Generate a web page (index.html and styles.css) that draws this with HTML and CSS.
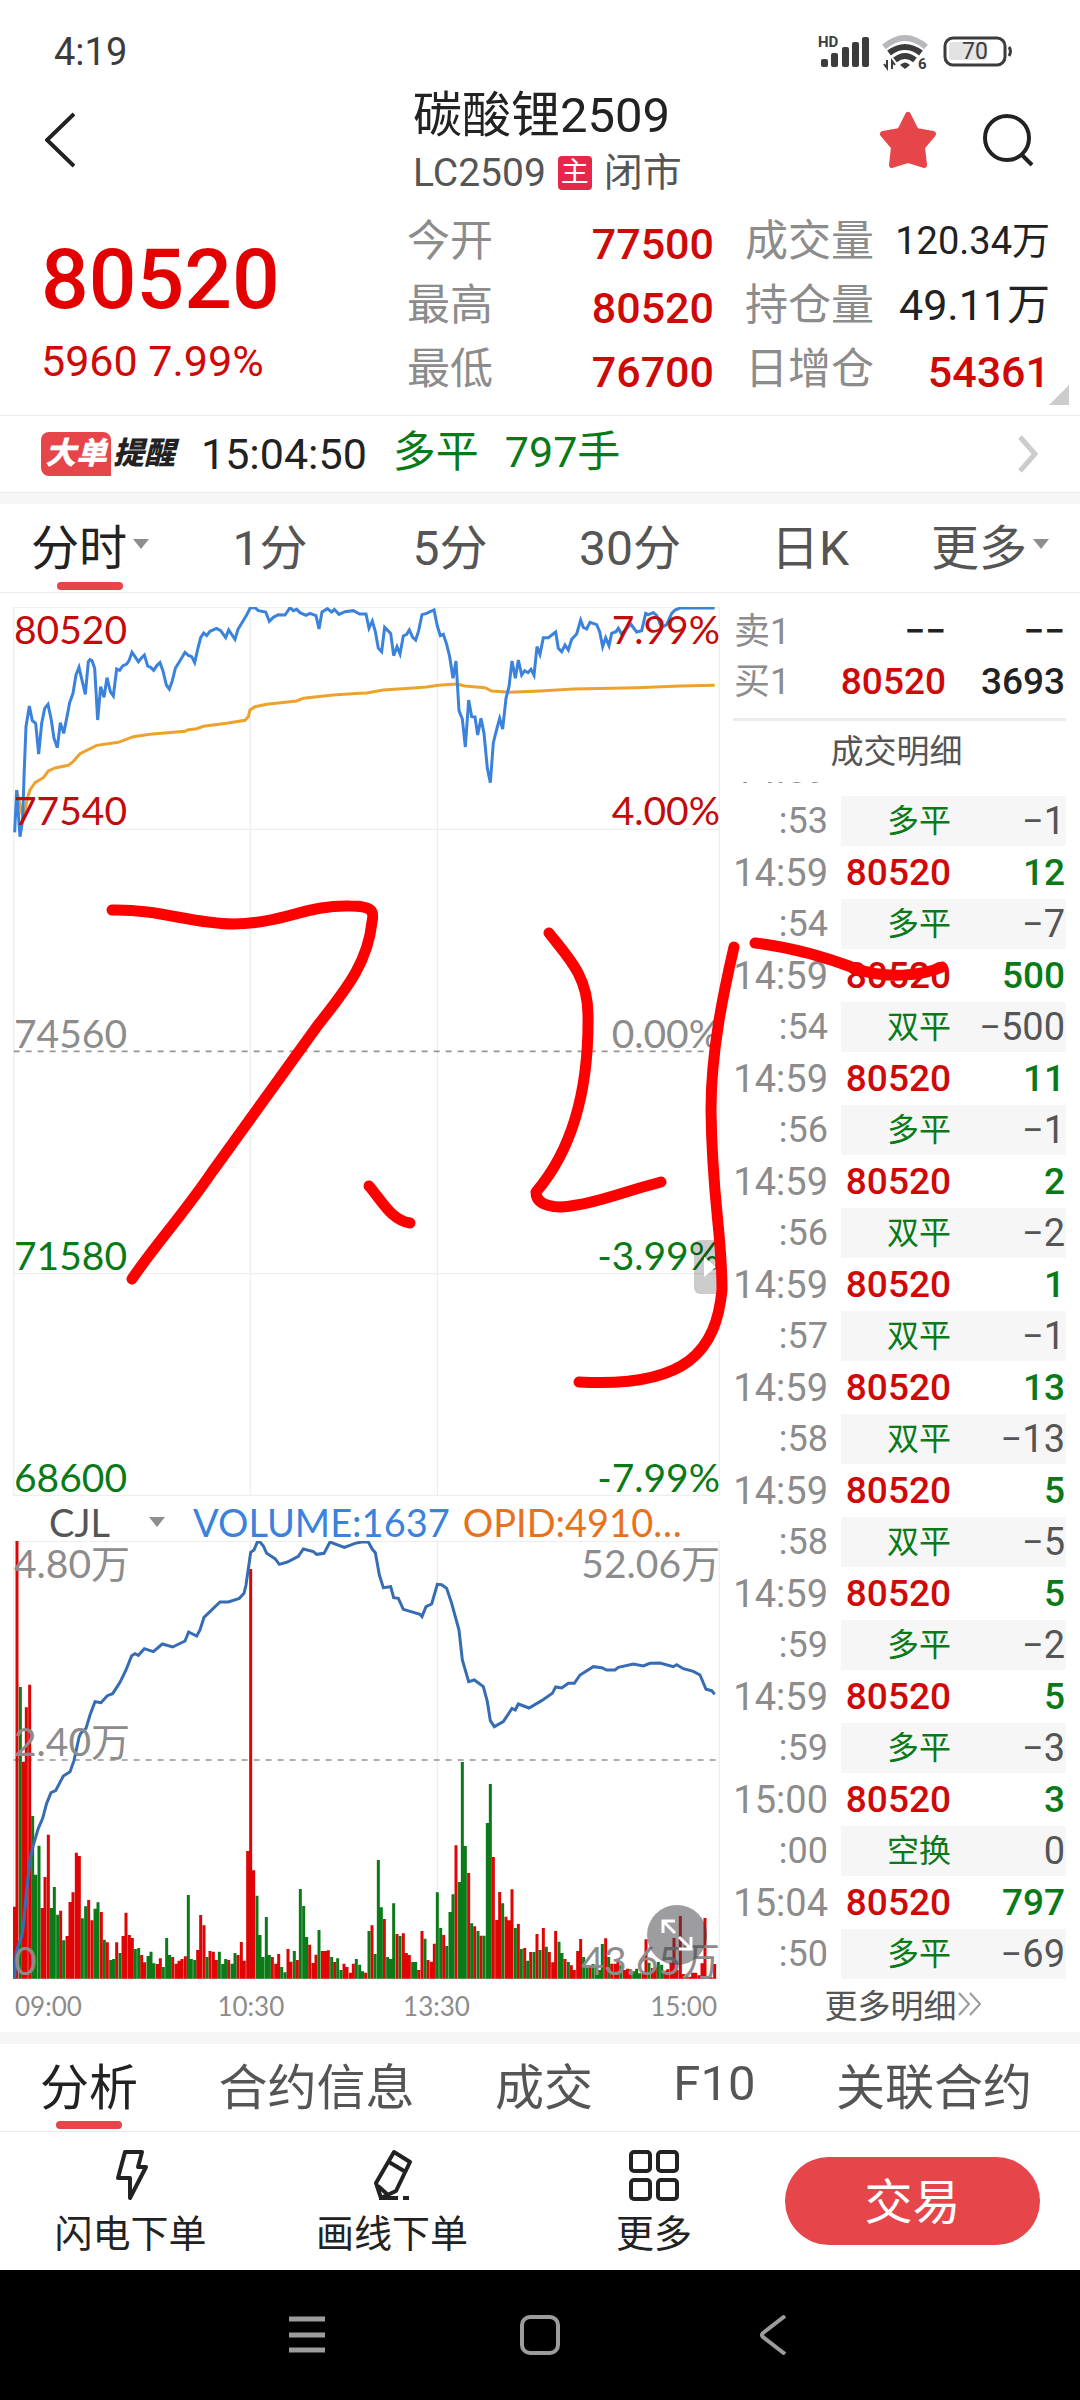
FILE: index.html
```html
<!DOCTYPE html>
<html lang="zh-CN">
<head>
<meta charset="utf-8">
<meta name="viewport" content="width=device-width">
<title>碳酸锂2509</title>
<link rel="stylesheet" href="styles.css">
</head>
<body>
<div class="app">
  <div class="status">
    <span class="clock">4:19</span>
    <svg class="status-icons" viewBox="818 34 196 38" width="196" height="38" aria-hidden="true">
      <text x="818" y="48" class="hd">HD</text>
      <g fill="#3c3c3c">
        <rect x="821" y="60" width="7" height="8" rx="2"/><rect x="831" y="54" width="7" height="14" rx="2"/><rect x="842" y="48" width="7" height="20" rx="2"/><rect x="852" y="43" width="7" height="25" rx="2"/><rect x="862" y="38" width="7" height="30" rx="2"/>
      </g>
      <g fill="none" stroke-width="6">
        <path d="M884 48Q905 30 926 48" stroke="#b9b7bb"/>
        <path d="M889 54Q905 42 921 54" stroke="#3c3c3c"/>
        <path d="M895 61Q905 53 915 61" stroke="#3c3c3c"/>
      </g>
      <path d="M900 66Q905 61 910 66L905 70Z" fill="#3c3c3c"/>
      <path d="M887 61V69L884 65M892 70V62L895 66" fill="none" stroke="#3c3c3c" stroke-width="2"/>
      <text x="918" y="70" class="hd">6</text>
      <rect x="949" y="43" width="38" height="18" rx="3" fill="#e3e3e3"/>
      <rect x="945" y="39" width="60" height="27" rx="8" fill="none" stroke="#3c3c3c" stroke-width="3"/>
      <path d="M1009 48Q1012 52 1009 57" stroke="#3c3c3c" stroke-width="3" fill="none"/>
      <text x="962" y="60" class="level">70</text>
    </svg>
  </div>

  <header class="header">
    <button class="icon-btn" aria-label="返回"><svg width="30" height="56" viewBox="0 0 30 56"><path d="M29 2L2 28L29 54" fill="none" stroke="#222" stroke-width="4"/></svg></button>
    <div class="heading">
      <h1>碳酸锂2509</h1>
      <p><span>LC2509</span><b class="main-tag">主</b><span>闭市</span></p>
    </div>
    <button class="icon-btn star" aria-label="自选"><svg width="58" height="58" viewBox="0 0 58 58"><path d="M29 4L37 20L54 23L43 36L45 54L29 49L13 54L15 36L4 23L21 20Z" fill="#e64549" stroke="#e64549" stroke-width="6" stroke-linejoin="round"/></svg></button>
    <button class="icon-btn" aria-label="搜索"><svg width="54" height="54" viewBox="0 0 54 54"><circle cx="26" cy="25" r="22" fill="none" stroke="#222" stroke-width="4"/><path d="M41 42L51 52" stroke="#222" stroke-width="4"/></svg></button>
  </header>

  <section class="quote">
    <div class="last up"><strong>80520</strong><span>5960 7.99%</span></div>
    <dl>
      <div><dt>今开</dt><dd class="up">77500</dd></div>
      <div><dt>最高</dt><dd class="up">80520</dd></div>
      <div><dt>最低</dt><dd class="up">76700</dd></div>
    </dl>
    <dl class="right">
      <div><dt>成交量</dt><dd class="small">120.34万</dd></div>
      <div><dt>持仓量</dt><dd class="medium">49.11万</dd></div>
      <div><dt>日增仓</dt><dd class="up">54361</dd></div>
    </dl>
    <svg class="corner" width="20" height="20" viewBox="0 0 20 20" aria-hidden="true"><path d="M20 0V20H0Z" fill="#ccc"/></svg>
  </section>

  <a class="alert" href="#orders">
    <span class="alert-logo"><b>大单</b><i>提醒</i></span>
    <time>15:04:50</time>
    <span class="down">多平</span>
    <span class="down">797手</span>
    <svg class="go" width="22" height="40" viewBox="0 0 22 40" aria-hidden="true"><path d="M3 3L18 20L3 37" fill="none" stroke="#ccc" stroke-width="5"/></svg>
  </a>
  <div class="band"></div>

  <nav class="periods">
    <button class="active">分时<i class="caret"></i></button>
    <button>1分</button>
    <button>5分</button>
    <button>30分</button>
    <button>日K</button>
    <button>更多<i class="caret"></i></button>
  </nav>

  <main class="market">
    <div class="charts">
      <div class="price-plot">
        <svg class="plot" viewBox="39 51 2121 2667" preserveAspectRatio="none" aria-hidden="true">
          <path class="grid" d="M41 52H2158V2716H41ZM41 718H2158M41 2051H2158M751 52V2716M1312 52V2716"/>
          <path class="dash" d="M41 1384H2158"/>
          <polyline class="average" points="50,600 70,690 82,625 90,600 105,578 130,563 145,543 165,534 205,526 220,514 240,491 290,466 355,457 400,440 450,433 555,424 565,419 590,416 610,409 680,400 735,391 745,380 750,360 765,350 800,343 890,333 910,325 1000,315 1079,310 1100,309 1150,300 1230,295 1280,291 1315,286 1370,282 1395,288 1455,293 1475,303 1530,307 1620,303 1720,297 1910,293 2040,288 2144,286"/>
          <polyline class="price" points="44,727 50,600 60,740 68,690 72,560 78,410 88,348 97,392 107,400 116,492 125,400 134,355 144,343 153,385 162,445 172,473 181,398 191,430 200,385 209,338 219,310 228,255 237,232 247,275 256,313 265,215 270,209 276,212 284,235 293,390 302,290 312,322 321,263 331,305 340,318 350,237 359,241 368,228 380,222 387,212 396,187 405,200 415,215 425,203 433,195 443,228 452,232 461,241 471,226 480,218 489,243 499,285 508,297 517,272 526,235 540,212 555,187 565,196 575,200 584,218 593,178 602,143 611,129 620,137 630,124 650,115 662,122 677,143 686,120 705,148 714,118 740,75 751,53 765,53 775,62 797,66 808,94 820,82 835,74 855,75 870,53 880,62 890,58 900,68 918,76 930,70 948,77 957,117 966,66 982,56 995,66 1003,58 1017,73 1035,65 1060,62 1079,72 1098,72 1107,115 1117,93 1126,125 1135,175 1145,185 1154,112 1172,130 1181,197 1191,170 1200,192 1210,138 1220,133 1228,120 1238,142 1247,150 1256,122 1266,74 1280,70 1302,60 1312,108 1321,137 1330,133 1340,163 1349,200 1359,265 1368,213 1377,362 1387,387 1396,471 1406,330 1415,380 1425,381 1433,435 1443,385 1452,430 1462,535 1471,578 1480,458 1490,418 1499,385 1508,417 1518,325 1527,290 1536,213 1546,265 1555,210 1565,255 1574,242 1584,248 1593,238 1602,256 1611,170 1620,193 1630,143 1645,143 1667,126 1675,175 1685,185 1695,165 1705,180 1715,148 1730,132 1742,90 1750,112 1760,117 1770,97 1790,104 1799,125 1808,170 1817,143 1827,167 1835,130 1848,125 1855,115 1865,133 1892,102 1910,126 1925,122 1937,70 1945,74 1960,68 1970,76 1985,112 2000,104 2015,70 2025,60 2040,54 2144,54"/>
        </svg>
        <div class="labels quarters">
          <div class="up both"><span>80520</span><span>7.99%</span><span>77540</span><span>4.00%</span></div>
          <div><span>74560</span><span>0.00%</span></div>
          <div class="down"><span>71580</span><span>-3.99%</span></div>
          <div class="down"><span>68600</span><span>-7.99%</span></div>
        </div>
        <button class="handle" aria-label="收起明细"><svg width="12" height="20" viewBox="0 0 12 20"><path d="M0 0L12 10L0 20Z" fill="#fff"/></svg></button>
      </div>
      <div class="indicator">
        <button>CJL<i class="caret"></i></button>
        <span class="vol">VOLUME:1637</span>
        <span class="opid">OPID:4910…</span>
      </div>
      <div class="volume-plot">
        <svg class="plot" viewBox="39 -597 2121 1314" preserveAspectRatio="none" aria-hidden="true">
          <path class="grid" d="M41 -596H2158V716H41ZM751 -596V716M1312 -596V716"/>
          <path class="dash" d="M41 60H2158"/>
          <path id="bars-up" class="bars red"/>
          <path id="bars-down" class="bars green"/>
          <polyline class="interest" points="44,716 48,640 55,615 65,590 70,560 80,450 90,360 100,315 115,265 128,235 140,190 153,158 167,152 190,108 210,95 222,62 237,-8 242,-20 258,-35 270,-75 285,-115 303,-112 322,-133 338,-139 360,-173 378,-210 395,-253 405,-259 415,-254 433,-274 460,-265 487,-288 518,-279 555,-297 566,-324 590,-312 600,-330 612,-368 660,-414 685,-414 718,-425 732,-440 738,-465 752,-563 762,-570 772,-594 780,-594 790,-582 800,-560 825,-544 838,-527 862,-534 895,-551 910,-573 940,-565 950,-557 972,-560 990,-594 1033,-578 1065,-590 1085,-594 1105,-594 1117,-572 1126,-562 1138,-495 1150,-457 1172,-460 1181,-427 1195,-425 1210,-392 1260,-377 1266,-370 1278,-400 1295,-408 1312,-467 1325,-466 1340,-455 1355,-410 1377,-330 1387,-240 1406,-175 1423,-180 1450,-160 1462,-115 1471,-58 1483,-40 1510,-55 1536,-95 1546,-90 1555,-108 1587,-96 1625,-118 1657,-140 1667,-159 1685,-156 1705,-170 1723,-170 1740,-195 1780,-220 1805,-217 1820,-210 1845,-210 1855,-218 1900,-228 1930,-222 1950,-230 1980,-231 2020,-220 2030,-226 2050,-214 2080,-206 2100,-195 2118,-152 2135,-148 2144,-137"/>
        </svg>
        <div class="labels halves">
          <div class="both"><span>4.80万</span><span>52.06万</span><span>2.40万</span></div>
          <div><span>0</span><span>43.65万</span></div>
        </div>
        <button class="expand" aria-label="全屏"><svg width="36" height="36" viewBox="0 0 36 36" fill="none" stroke="#fff" stroke-width="3"><path d="M16 16L4 4M4 16V4H16M20 20L32 32M32 20V32H20"/></svg></button>
      </div>
      <div class="axis"><time>09:00</time><time>10:30</time><time>13:30</time><time>15:00</time></div>
    </div>

    <aside class="side">
      <table class="book">
        <tr><th>卖1</th><td>−−</td><td>−−</td></tr>
        <tr><th>买1</th><td class="up">80520</td><td>3693</td></tr>
      </table>
      <h2>成交明细</h2>
      <div class="ticks">
        <table id="orders">
          <tr><th>14:59</th><td>80520</td><td>6</td></tr>
          <tr class="sub"><th>:53</th><td>多平</td><td>−1</td></tr>
          <tr><th>14:59</th><td>80520</td><td>12</td></tr>
          <tr class="sub"><th>:54</th><td>多平</td><td>−7</td></tr>
          <tr><th>14:59</th><td>80520</td><td>500</td></tr>
          <tr class="sub"><th>:54</th><td>双平</td><td>−500</td></tr>
          <tr><th>14:59</th><td>80520</td><td>11</td></tr>
          <tr class="sub"><th>:56</th><td>多平</td><td>−1</td></tr>
          <tr><th>14:59</th><td>80520</td><td>2</td></tr>
          <tr class="sub"><th>:56</th><td>双平</td><td>−2</td></tr>
          <tr><th>14:59</th><td>80520</td><td>1</td></tr>
          <tr class="sub"><th>:57</th><td>双平</td><td>−1</td></tr>
          <tr><th>14:59</th><td>80520</td><td>13</td></tr>
          <tr class="sub"><th>:58</th><td>双平</td><td>−13</td></tr>
          <tr><th>14:59</th><td>80520</td><td>5</td></tr>
          <tr class="sub"><th>:58</th><td>双平</td><td>−5</td></tr>
          <tr><th>14:59</th><td>80520</td><td>5</td></tr>
          <tr class="sub"><th>:59</th><td>多平</td><td>−2</td></tr>
          <tr><th>14:59</th><td>80520</td><td>5</td></tr>
          <tr class="sub"><th>:59</th><td>多平</td><td>−3</td></tr>
          <tr><th>15:00</th><td>80520</td><td>3</td></tr>
          <tr class="sub"><th>:00</th><td>空换</td><td>0</td></tr>
          <tr><th>15:04</th><td>80520</td><td>797</td></tr>
          <tr class="sub"><th>:50</th><td>多平</td><td>−69</td></tr>
        </table>
      </div>
      <a class="more" href="#orders">更多明细<svg width="26" height="24" viewBox="0 0 26 24" aria-hidden="true"><path d="M2 1L12 12L2 23M13 1L23 12L13 23" fill="none" stroke="#999" stroke-width="2"/></svg></a>
    </aside>
  </main>
  <div class="band plain"></div>

  <nav class="sections">
    <button class="active">分析</button>
    <button>合约信息</button>
    <button>成交</button>
    <button>F10</button>
    <button>关联合约</button>
  </nav>

  <div class="actions">
    <button class="action"><svg width="50" height="52" viewBox="0 0 50 52"><path d="M19 3H36L32 18H40L24 49V29H12Z" fill="none" stroke="#222" stroke-width="4" stroke-linejoin="round"/></svg>闪电下单</button>
    <button class="action"><svg width="50" height="52" viewBox="0 0 50 52" fill="none" stroke="#222" stroke-width="4" stroke-linejoin="round"><path d="M27 3L43 13L29 42L14 49L9 34ZM22 13L37 22M11 37L20 45M12 49H31"/><path d="M36 49H42"/></svg>画线下单</button>
    <button class="action"><svg width="50" height="52" viewBox="0 0 50 52" fill="none" stroke="#222" stroke-width="4"><rect x="2" y="3" width="19" height="19" rx="3"/><rect x="29" y="3" width="19" height="19" rx="3"/><rect x="2" y="31" width="19" height="19" rx="3"/><rect x="29" y="31" width="19" height="19" rx="3"/></svg>更多</button>
    <button class="trade">交易</button>
  </div>

  <div class="system">
    <button aria-label="最近任务"><svg width="40" height="40" viewBox="0 0 40 40"><path d="M2 4H38M2 20H38M2 35H38" stroke="#9c9c9c" stroke-width="5"/></svg></button>
    <button aria-label="主屏幕"><svg width="40" height="40" viewBox="0 0 40 40"><rect x="2" y="2" width="36" height="36" rx="8" fill="none" stroke="#9c9c9c" stroke-width="4"/></svg></button>
    <button aria-label="后退"><svg width="40" height="40" viewBox="0 0 40 40"><path d="M32 1L10 18Q8 20 10 22L32 39" fill="none" stroke="#9c9c9c" stroke-width="4"/></svg></button>
  </div>

  <svg class="ink" viewBox="0 0 1080 2400" aria-hidden="true">
    <g fill="none" stroke="#f00" stroke-width="11" stroke-linecap="round" stroke-linejoin="round">
      <path d="M112 910C160 909 192 924 234 924C285 923 305 905 350 906C374 906 374 912 372 922C368 960 350 985 318 1025L212 1172C182 1216 155 1245 132 1279"/>
      <path d="M369 1186C382 1201 391 1220 410 1223"/>
      <path d="M549 933C566 955 588 975 588 1015C589 1090 572 1150 536 1192Q536 1206 560 1207C592 1205 622 1192 661 1182"/>
      <path d="M734 947C724 990 711 1050 711 1110C712 1200 722 1232 722 1290C716 1350 688 1388 579 1382"/>
      <path d="M755 943C790 947 820 955 857 969C885 979 922 976 942 967"/>
    </g>
  </svg>
</div>
<script src="chart.js"></script>
</body>
</html>
```

FILE: styles.css
```css
* { box-sizing: border-box; }
body, h1, h2, p, dl, dd { margin: 0; }
body {
  background: #fff;
  color: #222;
  font-family: Roboto, "Noto Sans CJK SC", sans-serif;
}
button {
  padding: 0;
  border: 0;
  background: none;
  color: inherit;
  font: inherit;
}
a { color: inherit; text-decoration: none; }
svg { display: block; }
i { font-style: normal; }
.app { position: relative; min-height: 100vh; display: flex; flex-direction: column; }
.up { color: #cf0808; }
.down { color: #0a7a18; }
.caret {
  display: inline-block;
  border: 8px solid transparent;
  border-top: 10px solid #8e8e90;
  border-bottom: 0;
}

/* status bar */
.status {
  height: 80px;
  padding: 24px 66px 0 54px;
  display: flex;
  justify-content: space-between;
  align-items: center;
}
.clock { font-size: 38px; color: #3c3c3c; }
.hd { font: bold 15px Roboto, sans-serif; fill: #3c3c3c; }
.level { font: 23px Roboto, sans-serif; fill: #3c3c3c; }

/* title */
.header {
  height: 120px;
  padding: 0 45px 0 45px;
  display: grid;
  grid-template-columns: 300px 1fr 58px 54px;
  column-gap: 44px;
  align-items: center;
}
.heading { margin-left: 24px; }
.heading h1 { padding-top: 2px; font-size: 49px; font-weight: 400; line-height: 68px; }
.heading p {
  display: flex;
  align-items: center;
  gap: 12px;
  padding-bottom: 4px;
  font-size: 39px;
  line-height: 46px;
  color: #555;
}
.main-tag {
  width: 34px;
  border-radius: 4px;
  background: #e8264a;
  color: #fff;
  font-size: 28px;
  font-weight: 400;
  line-height: 34px;
  text-align: center;
}

/* quote */
.quote {
  position: relative;
  padding: 12px 30px 11px 41px;
  display: grid;
  grid-template-columns: 366fr 307fr 336fr;
  border-bottom: 1px solid #ebebeb;
}
.last { padding-top: 20px; display: flex; flex-direction: column; font-size: 43px; line-height: 66px; }
.last strong { font-size: 84px; font-weight: 500; line-height: 96px; color: #e20000; }
.quote dl div { height: 64px; display: flex; justify-content: space-between; align-items: center; line-height: 58px; }
.quote dl.right { padding-left: 31px; }
.quote dt { padding-bottom: 6px; font-size: 43px; color: #8c8c8c; }
.quote dd { font-size: 43px; font-weight: 500; }
.quote dd.small, .quote dd.medium { padding-bottom: 6px; font-weight: 400; }
.quote dd.small { font-size: 38px; }
.corner { position: absolute; right: 11px; bottom: 10px; }

/* large order alert */
.alert {
  height: 76px;
  padding: 0 41px;
  display: flex;
  align-items: center;
  gap: 26px;
  font-size: 43px;
  line-height: 60px;
}
.alert .down { padding-bottom: 4px; }
.alert-logo { display: flex; align-items: center; gap: 2px; font-size: 31px; line-height: 44px; font-weight: 900; font-style: italic; }
.alert-logo b { padding: 0 4px; border-radius: 8px 8px 0 8px; background: #e64549; color: #fff; }
.alert-logo i { font-style: italic; }
.go { margin-left: auto; }
.band { height: 12px; background: #f6f6f6; border-top: 1px solid #ebebeb; }
.band.plain { border: 0; }

/* tab rows */
.periods {
  height: 89px;
  display: grid;
  grid-template-columns: repeat(6, 1fr);
  border-bottom: 1px solid #ebebeb;
  font-size: 48px;
  color: #555;
}
.periods button, .sections button {
  position: relative;
  display: flex;
  align-items: center;
  justify-content: center;
  gap: 6px;
  padding-bottom: 9px;
}
.active { color: #222; }
.active::after {
  content: "";
  position: absolute;
  left: 50%;
  bottom: 2px;
  width: 66px;
  height: 8px;
  margin-left: -33px;
  border-radius: 4px;
  background: #e64549;
}
.sections {
  height: 88px;
  padding: 0 48px 0 40px;
  display: flex;
  justify-content: space-between;
  border-bottom: 1px solid #ebebeb;
  font-size: 49px;
  color: #555;
}

/* charts */
.market {
  padding: 14px 14px 0 13px;
  display: grid;
  grid-template-columns: minmax(0, 1fr) 333px;
  column-gap: 13px;
}
.price-plot, .volume-plot { position: relative; }
.plot { width: 100%; }
.price-plot .plot { height: 889px; }
.volume-plot .plot { height: 438px; }
.plot path, .plot polyline { fill: none; }
.grid { stroke: #eeeef0; stroke-width: 4; }
.dash { stroke: #949494; stroke-width: 5; stroke-dasharray: 18 18; }
.price { stroke: #3a82dc; stroke-width: 9; }
.average { stroke: #eca22c; stroke-width: 9; }
.interest { stroke: #366cb4; stroke-width: 9; }
.bars { stroke-width: 9; }
.bars.red { stroke: #df0505; }
.bars.green { stroke: #0b7a18; }
.labels {
  position: absolute;
  inset: 0;
  display: grid;
  padding: 0 0 0 1px;
  color: #8c8c8c;
  font-family: Lato, "Noto Sans CJK SC", sans-serif;
  font-size: 39px;
  line-height: 38px;
}
.quarters { grid-template-rows: repeat(4, 1fr); }
.halves { grid-template-rows: repeat(2, 1fr); }
.labels div { display: flex; justify-content: space-between; align-items: flex-end; }
.labels .both { display: grid; grid-template-columns: 1fr auto; align-content: space-between; padding-top: 3px; }
.labels .up { color: #c40a0a; }
.labels .down { color: #0a7a18; }
.handle {
  position: absolute;
  right: 0;
  top: 633px;
  width: 26px;
  height: 54px;
  padding-left: 10px;
  border-radius: 6px 0 0 6px;
  background: rgba(0, 0, 0, .2);
}
.indicator {
  height: 45px;
  padding-top: 6px;
  display: flex;
  align-items: center;
  gap: 13px;
  font: 38px/38px Lato, sans-serif;
  white-space: nowrap;
}
.indicator button { width: 167px; padding: 0 15px 0 36px; display: flex; align-items: center; justify-content: space-between; color: #555; }
.vol { color: #3a82dc; }
.opid { color: #e8721c; }
.expand {
  position: absolute;
  right: 13px;
  bottom: 14px;
  width: 60px;
  height: 60px;
  padding: 12px;
  border-radius: 50%;
  background: rgba(60, 60, 66, .5);
}
.axis {
  height: 53px;
  padding: 0 3px 0 2px;
  display: grid;
  grid-template-columns: 144fr 187fr 187fr 189fr;
  align-items: center;
  text-align: center;
  font: 26px Lato, sans-serif;
  color: #8c8c8c;
}
.axis time:first-child { text-align: left; }
.axis time:last-child { text-align: right; }

/* order book and ticks */
.side { display: flex; flex-direction: column; font-size: 38px; }
.side table { width: 100%; border-collapse: collapse; table-layout: fixed; }
.side th, .side td { padding: 0; font-weight: 400; text-align: right; line-height: 50px; }
.side th { width: 95px; color: #8c8c8c; }
.side td:last-child { width: 115px; padding-right: 1px; }
.book { margin-bottom: 11px; }
.book th { font-size: 36px; text-align: left; padding-left: 1px; }
.book td { font-size: 37px; font-weight: 500; }
.book td:nth-child(2) { padding-right: 5px; }
.side h2 {
  border-top: 3px solid #ebebeb;
  font-size: 33px;
  font-weight: 400;
  line-height: 61px;
  text-align: center;
  color: #555;
  padding-right: 6px;
}
.ticks { flex: 1 1 0px; min-height: 0; overflow: hidden; display: flex; flex-direction: column; justify-content: flex-end; }
.ticks tr { height: 53px; color: #0a7a18; }
.ticks tr.sub { height: 50px; color: #555; font-size: 36px; }
.ticks td { font-size: 37px; font-weight: 500; }
.ticks td:nth-child(2) { color: #cf0808; }
.ticks .sub td { background: linear-gradient(#f6f6f6, #f6f6f6) right / 100% no-repeat; font-weight: 400; }
.ticks .sub td:nth-child(2) { color: #0a7a18; font-size: 32px; background-size: 110px 100%; }
.ticks .sub td:last-child { font-size: 38px; }
.more { height: 53px; padding: 0 0 3px 8px; display: flex; align-items: center; justify-content: center; font-size: 33px; color: #555; }

/* bottom actions */
.actions {
  height: 138px;
  padding-right: 40px;
  display: grid;
  grid-template-columns: 261fr 262fr 262fr 255fr;
  align-items: center;
}
.action { height: 138px; padding-top: 17px; display: flex; flex-direction: column; align-items: center; gap: 11px; font-size: 38px; line-height: 44px; }
.trade { height: 88px; padding-bottom: 6px; border-radius: 44px; background: #e64549; color: #fff; font-size: 48px; }
.system { flex: 1; min-height: 130px; display: flex; align-items: center; justify-content: center; gap: 193px; background: #000; }

/* pen marks over the page */
.ink { position: absolute; left: 0; top: 0; width: 100%; pointer-events: none; }
```

FILE: chart.js
```js
// One entry per minute: colour (r = up, g = down) and the bar's top in chart units.
const bars = `r500 r-597 g-159 r65 r-98 r-166 g228 g404 g317 r504 r411 r284 g504 g441 g524 r512 g601 r588 r486 r457
r338 r348 g535 g499 r480 r541 g506 g487 r516 g599 r607 g660 g657 r607 g639 r588 r518 r585 r594 g627
g624 r645 r667 g648 g635 g670 r672 r655 g681 g594 g645 r651 r671 r662 r657 r649 g465 g657 g660 r630
r525 r556 g651 r633 r635 r660 g635 g672 g657 r660 g671 g639 r645 r606 r662 r333 r-513 r391 g467 g585
g651 g531 g645 r651 r671 r642 g681 g697 r627 r665 g633 r660 g447 g498 g591 r614 r669 r644 g570 r633
r633 r631 g651 r666 g655 g690 r671 r681 r698 r671 g657 g674 g694 r698 g573 r556 g642 g360 g502 r537
g651 g657 g490 r582 g588 r580 r639 r645 g666 g666 r690 r573 g596 r660 r665 r611 g457 g564 r585 g618
g516 g463 r316 g426 g66 g318 r399 g550 r559 g573 r587 g587 g249 g132 r351 r540 r456 g490 r530 r541
r448 g564 r552 g627 r624 g662 r636 g636 r582 g630 r564 g620 r636 r667 r573 g605 g639 r657 g666 r676
r690 r633 r597 g651 g682 r676 g672 g684 g690 g612 r595 g651 r671 r671 r656 g676 r690 r686 r688 g694
g686 g700 r698 r598 g668 r684 r682 g666 g674 r692 r688 r668 r594 r690 r528 r702 r704 r710 r698 r698
r706 r670 r534 r708 r712 r672`.split(/\s+/);

const draw = (colour) => bars
  .map((bar, i) => bar[0] === colour ? `M${Math.round(42 + i * 9.34)} 716V${bar.slice(1)}` : '')
  .join('');

document.getElementById('bars-up').setAttribute('d', draw('r'));
document.getElementById('bars-down').setAttribute('d', draw('g'));
```
